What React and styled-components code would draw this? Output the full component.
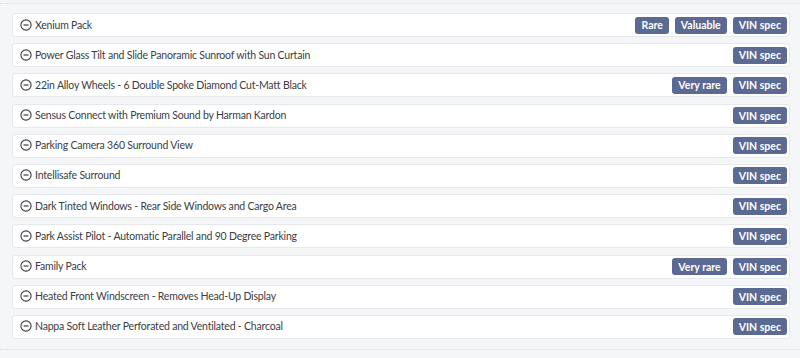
import styled, { createGlobalStyle } from "styled-components";

const GlobalStyle = createGlobalStyle`
  html, body {
    margin: 0;
    padding: 0;
    background: #f5f6f8;
    font-family: "Lato", "Noto Sans", sans-serif;
  }
`;

const Panel = styled.div`
  width: 800px;
  height: 358px;
  box-sizing: border-box;
  padding-top: 3px;
`;

const List = styled.div`
  display: flex;
  flex-direction: column;
  gap: 6.2px;
  padding: 9px 10px 10px 12px;
  border-top: 1px dotted #d9dce2;
  border-bottom: 1px dotted #d9dce2;
`;

const Row = styled.div`
  display: flex;
  align-items: center;
  height: 24px;
  box-sizing: border-box;
  padding: 0 2px 0 7px;
  background: #fff;
  border: 1px solid #e6e8ec;
  border-radius: 3px;
`;

const Label = styled.span`
  flex: 1;
  display: flex;
  align-items: center;
  gap: 3px;
  font-size: 10.5px;
  letter-spacing: -0.2px;
  color: #3a3d44;
  white-space: nowrap;
  padding-bottom: 1px;
`;

const Tags = styled.div`
  display: flex;
  gap: 6px;
`;

const Tag = styled.span`
  display: inline-flex;
  align-items: center;
  height: 17px;
  padding: 0 6px;
  border-radius: 3px;
  background: #5a6a92;
  color: #fff;
  font-size: 10.5px;
  font-weight: 700;
  white-space: nowrap;
`;

const MinusCircle = () => (
  <svg width="12" height="12" viewBox="0 0 12 12" fill="none">
    <circle cx="6" cy="6" r="5.1" stroke="#3a3d44" strokeWidth="1.1" />
    <line x1="3.5" y1="6" x2="8.5" y2="6" stroke="#3a3d44" strokeWidth="1.2" />
  </svg>
);

const options = [
  { name: "Xenium Pack", tags: ["Rare", "Valuable"] },
  { name: "Power Glass Tilt and Slide Panoramic Sunroof with Sun Curtain", tags: [] },
  { name: "22in Alloy Wheels - 6 Double Spoke Diamond Cut-Matt Black", tags: ["Very rare"] },
  { name: "Sensus Connect with Premium Sound by Harman Kardon", tags: [] },
  { name: "Parking Camera 360 Surround View", tags: [] },
  { name: "Intellisafe Surround", tags: [] },
  { name: "Dark Tinted Windows - Rear Side Windows and Cargo Area", tags: [] },
  { name: "Park Assist Pilot - Automatic Parallel and 90 Degree Parking", tags: [] },
  { name: "Family Pack", tags: ["Very rare"] },
  { name: "Heated Front Windscreen - Removes Head-Up Display", tags: [] },
  { name: "Nappa Soft Leather Perforated and Ventilated - Charcoal", tags: [] },
];

const App = () => {
  return (
    <>
      <GlobalStyle />
      <Panel>
        <List>
          {options.map((opt) => (
            <Row key={opt.name}>
              <Label>
                <MinusCircle />
                {opt.name}
              </Label>
              <Tags>
                {opt.tags.map((t) => (
                  <Tag key={t}>{t}</Tag>
                ))}
                <Tag>VIN spec</Tag>
              </Tags>
            </Row>
          ))}
        </List>
      </Panel>
    </>
  );
};

export default App;
